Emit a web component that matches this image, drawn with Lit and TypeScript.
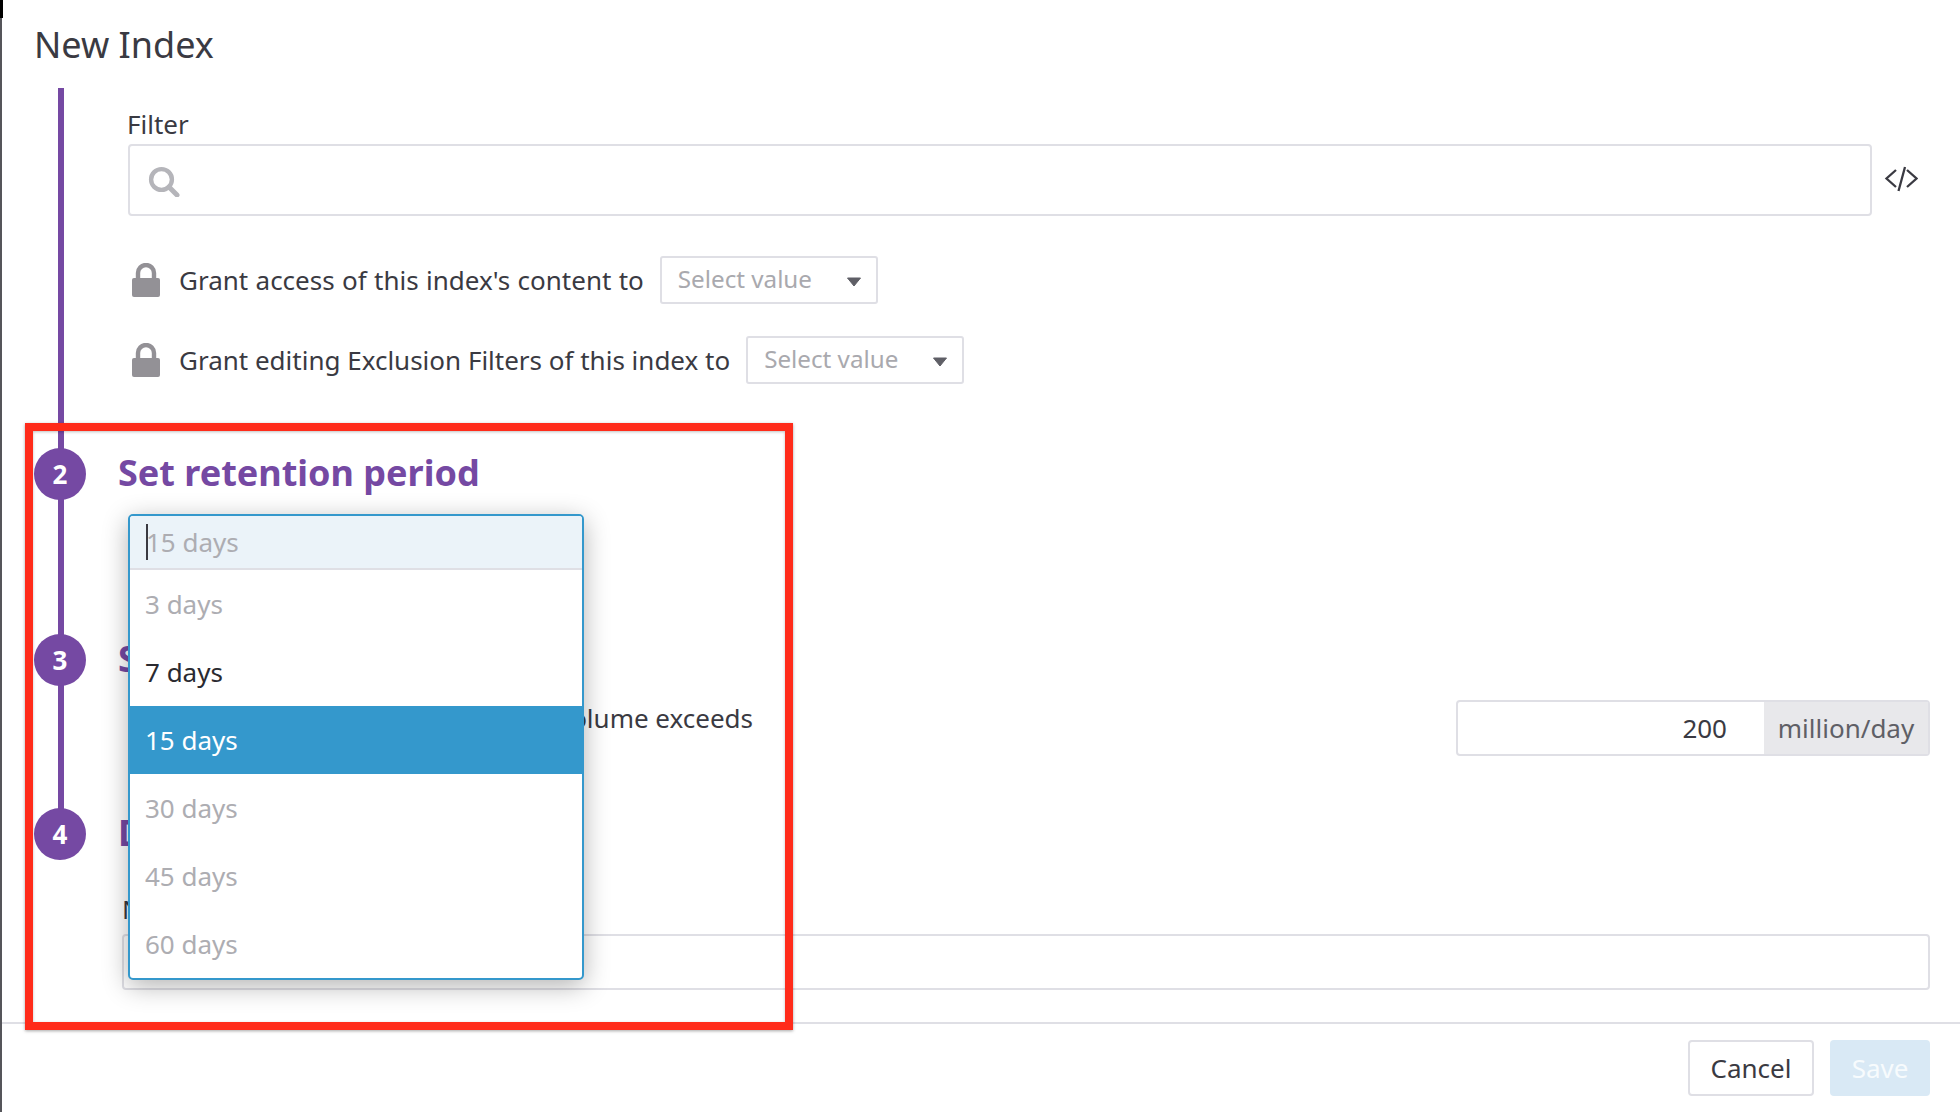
import { LitElement, html, css, svg } from "lit";
import { customElement } from "lit/decorators.js";

const caret = svg`<svg class="caret" width="16" height="10" viewBox="0 0 16 10"><path d="M1.5 1h13L8 9z" fill="#5f5f66" stroke="#5f5f66" stroke-width="1" stroke-linejoin="round"/></svg>`;
const lock = html`<svg class="lock" width="30" height="34" viewBox="0 0 30 34"><path d="M7 16V10a8 8 0 0 1 16 0v6" fill="none" stroke="#939196" stroke-width="4.4"/><rect x="1" y="15" width="28" height="19" rx="2" fill="#939196"/></svg>`;

@customElement("app-root")
export class AppRoot extends LitElement {
  static styles = css`
    :host { display: block; width: 1960px; height: 1112px; position: relative; overflow: hidden; background: #fff; font-family: "Noto Sans", sans-serif; color: #3a3a42; font-size: 26px; }
    .edge { position: absolute; left: 0; top: 0; bottom: 0; width: 2px; background: #55555a; }
    .edge-top { position: absolute; left: 0; top: 0; width: 3px; height: 18px; background: #000; }
    .page { height: 100%; display: flex; flex-direction: column; }
    .title { font-size: 36px; line-height: 50px; padding: 20px 0 0 34px; height: 88px; box-sizing: border-box; color: #3a3a42; }
    .main { position: relative; flex: 1; }
    .rail { position: absolute; left: 58px; top: 0; width: 6px; height: 746px; background: #7549a3; }
    .filter { padding: 18px 0 0 128px; }
    .label { line-height: 36px; height: 38px; margin-left: -1px; }
    .filter-row { display: flex; align-items: center; }
    .search { width: 1744px; height: 72px; box-sizing: border-box; border: 2px solid #dfdfe5; border-radius: 4px; display: flex; align-items: center; padding-left: 18px; }
    .code { margin: -3px 0 0 12px; }
    .grant { display: flex; align-items: center; height: 48px; }
    .grant.g1 { margin-top: 40px; word-spacing: 0.6px; }
    .grant.g2 { margin-top: 32px; }
    .lock { margin: 0 18px 0 3px; flex: none; }
    .sel { margin-left: 16px; width: 218px; height: 48px; box-sizing: border-box; border: 2px solid #dfdfe5; border-radius: 3px; display: flex; align-items: center; justify-content: space-between; padding: 0 14px 0 16px; color: #a9a9ae; font-size: 24.2px; word-spacing: 0; }
    .sel span { margin-top: -3px; }
    .caret { margin-top: 3px; }
    .step { display: flex; align-items: center; position: absolute; left: 34px; }
    .circle { width: 52px; height: 52px; border-radius: 50%; background: #7549a3; color: #fff; font-weight: 700; font-size: 26px; display: flex; align-items: center; justify-content: center; position: relative; }
    .heading { margin: -2px 0 0 32px; font-size: 36px; font-weight: 700; color: #7549a3; line-height: 50px; white-space: nowrap; }
    .s2 { top: 360px; } .s3 { top: 546px; } .s4 { top: 720px; }
    .quota-text { position: absolute; left: 129px; width: 624px; top: 612px; line-height: 36px; white-space: nowrap; text-align: right; }
    .quota { position: absolute; left: 1456px; top: 612px; width: 474px; height: 56px; box-sizing: border-box; border: 2px solid #dfdfe5; border-radius: 4px; display: flex; }
    .quota .val { flex: 1; text-align: right; padding-right: 37px; line-height: 52px; }
    .quota .unit { width: 164px; background: #e8e8eb; color: #5f5f66; text-align: center; line-height: 52px; }
    .name-label { position: absolute; left: 122px; top: 803px; line-height: 36px; }
    .name { position: absolute; left: 122px; top: 846px; width: 1808px; height: 56px; box-sizing: border-box; border: 2px solid #dfdfe5; border-radius: 4px; }
    .footer { height: 90px; flex: none; border-top: 2px solid #dfdfe5; box-sizing: border-box; display: flex; justify-content: flex-end; align-items: flex-start; padding: 16px 30px 0 0; gap: 16px; }
    .btn { height: 56px; box-sizing: border-box; border-radius: 4px; display: flex; align-items: center; justify-content: center; }
    .cancel { width: 126px; border: 2px solid #dfdfe5; }
    .save { width: 100px; background: #d9e9f5; color: #f7fbfd; }
    .menu { position: absolute; left: 128px; top: 514px; width: 456px; height: 466px; box-sizing: border-box; border: 2px solid #3498cc; border-radius: 5px; background: #fff; box-shadow: 0 6px 26px rgba(0,0,0,.3); overflow: hidden; }
    .menu-input { height: 54px; box-sizing: border-box; background: #ebf3f9; border-bottom: 2px solid #dfdfe5; padding-left: 16px; line-height: 52px; color: #adadb2; position: relative; }
    .cursor { position: absolute; left: 16px; top: 8px; width: 2px; height: 36px; background: #3a3a42; }
    .opt { height: 68px; line-height: 68px; padding-left: 15px; color: #adadb2; }
    .opt.on { color: #2a2a30; }
    .opt.sel-opt { background: #3498cc; color: #fff; }
    .frame { position: absolute; left: 25px; top: 423px; width: 768px; height: 607px; box-sizing: border-box; border: 8px solid #ff2b1a; box-shadow: 0 1px 3px rgba(0,0,0,.35), inset 0 1px 3px rgba(0,0,0,.25); }
  `;

  render() {
    const opts: [string, string][] = [["3 days", ""], ["7 days", "on"], ["15 days", "sel-opt"], ["30 days", ""], ["45 days", ""], ["60 days", ""]];
    return html`
      <div class="page">
        <div class="title">New Index</div>
        <div class="main">
          <div class="rail"></div>
          <div class="filter">
            <div class="label">Filter</div>
            <div class="filter-row">
              <div class="search">
                <svg width="34" height="34" viewBox="0 0 34 34"><circle cx="13.5" cy="16.5" r="10.4" fill="none" stroke="#b5b5ba" stroke-width="4.4"/><path d="M21 24l8 8" stroke="#b5b5ba" stroke-width="5" stroke-linecap="round"/></svg>
              </div>
              <svg class="code" width="34" height="28" viewBox="0 0 34 28"><path d="M12 5L2.5 13.5 12 22M23 5l9.5 8.5L23 22M21 2l-6.5 24" fill="none" stroke="#3a3a42" stroke-width="2.3"/></svg>
            </div>
            <div class="grant g1">${lock}<span>Grant access of this index's content to</span><div class="sel"><span>Select value</span> ${caret}</div></div>
            <div class="grant g2">${lock}<span>Grant editing Exclusion Filters of this index to</span><div class="sel"><span>Select value</span> ${caret}</div></div>
          </div>
          <div class="step s2"><div class="circle">2</div><div class="heading">Set retention period</div></div>
          <div class="step s3"><div class="circle">3</div><div class="heading">Set daily quota</div></div>
          <div class="step s4"><div class="circle">4</div><div class="heading">Define name</div></div>
          <div class="quota-text">Stop indexing when the daily log volume exceeds</div>
          <div class="quota"><div class="val">200</div><div class="unit">million/day</div></div>
          <div class="name-label">Name</div>
          <div class="name"></div>
        </div>
        <div class="footer"><div class="btn cancel">Cancel</div><div class="btn save">Save</div></div>
      </div>
      <div class="edge"></div><div class="edge-top"></div>
      <div class="menu">
        <div class="menu-input"><span class="cursor"></span>15 days</div>
        ${opts.map(([t, c]) => html`<div class="opt ${c}">${t}</div>`)}
      </div>
      <div class="frame"></div>
    `;
  }
}
